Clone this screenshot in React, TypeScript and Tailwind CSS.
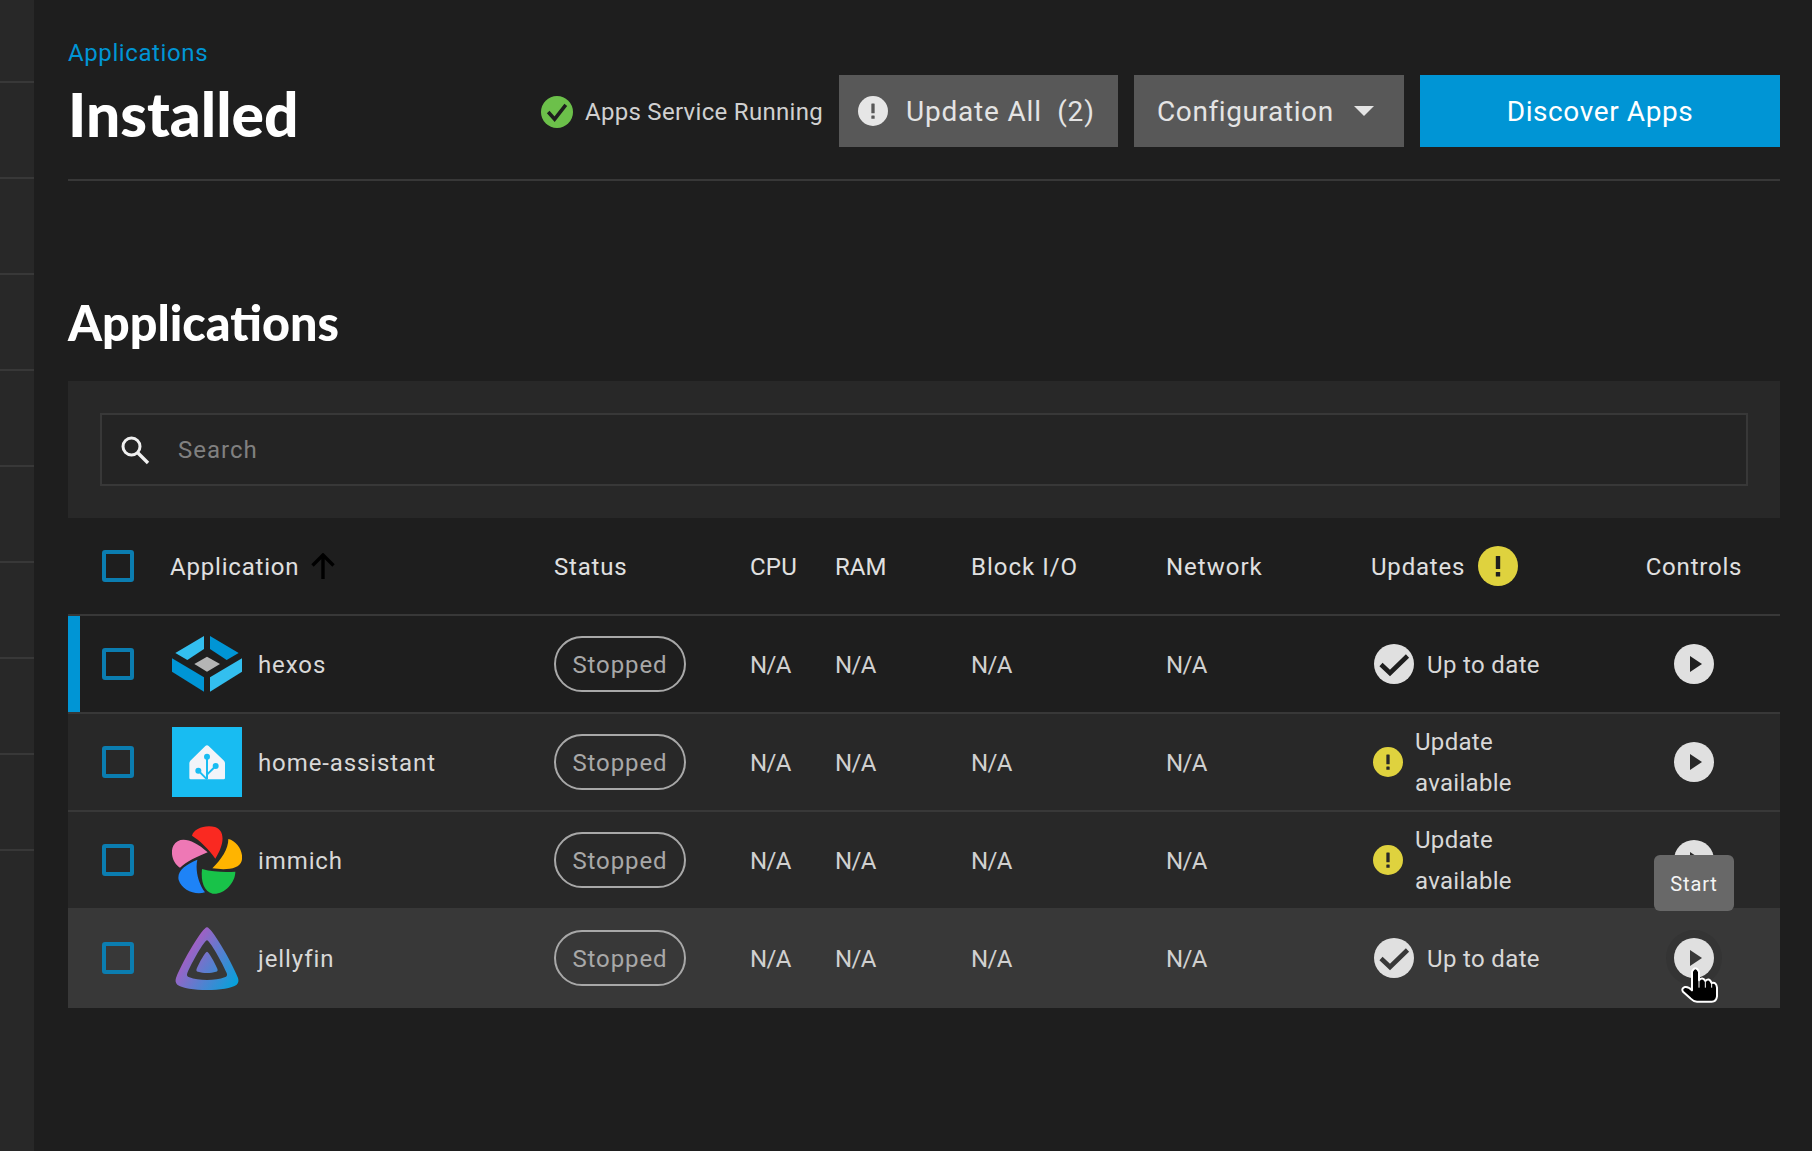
import React from "react";

const BODY = "font-['Roboto',sans-serif] tracking-[0.8px]";
const HEAD = "font-['Lato',sans-serif] font-black";
const GRID = "grid grid-cols-[102px_384px_196px_85px_136px_195px_204px_238px_172px] items-center";

function Hexos() {
  return (
    <svg width="70" height="56" viewBox="36 48 210 168">
      <polygon points="46,99 132,48 132,87 82,120" fill="#33bfef" />
      <polygon points="150,48 236,99 200,120 150,87" fill="#0095d5" />
      <polygon points="36,115 132,172 132,215 36,155" fill="#0095d5" />
      <polygon points="246,115 246,155 150,215 150,172" fill="#33bfef" />
      <polygon points="103,132 141,110 180,132 141,155" fill="#b5b5b5" />
    </svg>
  );
}

function HomeAssistant() {
  return (
    <svg width="70" height="70" viewBox="36 21 210 210">
      <rect x="36" y="21" width="210" height="210" fill="#18bcf2" />
      <path d="M136,78 Q141,73 146,78 L192,122 Q195,125 195,130 L195,174 Q195,178 191,178 L92,178 Q88,178 88,174 L88,130 Q88,125 91,122 Z" fill="#f2f4f9" />
      <path d="M141,110 L141,178 M115,152 L141,178 M167,138 L141,164" stroke="#18bcf2" strokeWidth="6" fill="none" />
      <circle cx="141" cy="110" r="9" fill="#18bcf2" />
      <circle cx="115" cy="152" r="9" fill="#18bcf2" />
      <circle cx="167" cy="138" r="9" fill="#18bcf2" />
    </svg>
  );
}

function Immich() {
  return (
    <svg width="70" height="70" viewBox="36 30 210 210">
      <path d="M96,62 C100,42 135,28 165,36 C195,46 195,85 166,131 C145,100 118,76 96,62 Z" fill="#fa2921" />
      <path d="M205,72 C232,78 252,112 245,138 C238,162 200,166 157,160 C185,132 205,102 205,72 Z" fill="#ffb400" />
      <path d="M126,162 C160,172 200,172 226,170 C226,205 190,240 158,236 C132,230 122,200 126,162 Z" fill="#18c249" />
      <path d="M112,134 C105,165 115,205 135,232 C105,242 66,225 56,195 C50,168 75,150 112,134 Z" fill="#1e83f7" />
      <path d="M143,112 C110,125 80,140 60,158 C38,145 30,112 40,92 C58,62 98,72 143,112 Z" fill="#ee78b5" />
    </svg>
  );
}

function Jellyfin() {
  return (
    <svg width="70" height="70" viewBox="36 20 210 210">
      <defs>
        <linearGradient id="jf" x1="75" y1="100" x2="235" y2="205" gradientUnits="userSpaceOnUse">
          <stop offset="0" stopColor="#aa5cc3" />
          <stop offset="1" stopColor="#00a4dc" />
        </linearGradient>
      </defs>
      <path
        fillRule="evenodd"
        fill="url(#jf)"
        d="M141,33 C128,33 70,130 48,185 Q44,197 52,205 C80,226 202,226 230,205 Q238,197 234,185 C212,130 154,33 141,33 Z M141,72 C133,72 95,140 82,170 Q78,180 88,183 C115,194 167,194 194,183 Q204,180 200,170 C187,140 149,72 141,72 Z"
      />
      <path fill="url(#jf)" d="M141,106 C136,106 118,138 110,157 Q107,165 114,166 C130,171 152,171 168,166 Q175,165 172,157 C164,138 146,106 141,106 Z" />
    </svg>
  );
}

function Alert({ size, bg, fg }: { size: number; bg: string; fg: string }) {
  return (
    <svg width={size} height={size} viewBox="0 0 40 40" className="shrink-0">
      <circle cx="20" cy="20" r="20" fill={bg} />
      <rect x="17.8" y="10" width="4.4" height="13" rx="0.5" fill={fg} />
      <rect x="17.8" y="26" width="4.4" height="4.4" rx="0.5" fill={fg} />
    </svg>
  );
}

function CheckCircle({ rowBg }: { rowBg: string }) {
  return (
    <svg width="40" height="40" viewBox="0 0 40 40" className="shrink-0">
      <circle cx="20" cy="20" r="20" fill="#e0e0e0" />
      <path d="M7 20.5 L16 29 L33.5 12" stroke={rowBg} strokeWidth="4.6" fill="none" />
    </svg>
  );
}

function Play({ rowBg }: { rowBg: string }) {
  return (
    <svg width="40" height="40" viewBox="0 0 40 40">
      <circle cx="20" cy="20" r="20" fill="#e0e0e0" />
      <polygon points="16,12 28,20 16,28" fill={rowBg} />
    </svg>
  );
}

function HandCursor() {
  return (
    <svg width="38" height="38" viewBox="122 374 114 114" className="absolute left-[7px] top-[27px]">
      <path
        d="M155,394 Q165,374 176,394 L176,420 Q186,408 195,422 Q206,410 214,428 Q228,424 230,442 L230,468 Q228,484 214,484 L170,484 Q160,484 150,474 L128,454 Q122,444 134,440 Q144,438 155,450 Z"
        fill="#000"
        stroke="#fff"
        strokeWidth="6"
        strokeLinejoin="round"
      />
      <path d="M176,422 L176,442 M195,424 L195,442 M214,430 L214,442" stroke="#fff" strokeWidth="3" fill="none" />
    </svg>
  );
}

function Checkbox() {
  return <div className="ml-[34px] h-8 w-8 rounded-[3px] border-4 border-[#0b7db0]" />;
}

type App = {
  name: string;
  icon: React.ReactNode;
  update: boolean;
  bg: string;
  rowClass: string;
};

const apps: App[] = [
  { name: "hexos", icon: <Hexos />, update: false, bg: "#1e1e1e", rowClass: "h-[98px] border-b-2 border-[#383838] bg-[#1e1e1e]" },
  { name: "home-assistant", icon: <HomeAssistant />, update: true, bg: "#282828", rowClass: "h-[98px] border-b-2 border-[#383838] bg-[#282828]" },
  { name: "immich", icon: <Immich />, update: true, bg: "#282828", rowClass: "h-[96px] bg-[#282828]" },
  { name: "jellyfin", icon: <Jellyfin />, update: false, bg: "#383838", rowClass: "h-[100px] bg-[#383838]" },
];

function Row({ app, index }: { app: App; index: number }) {
  const na = <span className="pt-[2px] tracking-[-0.6px] text-[#d0d0d0]">N/A</span>;
  return (
    <div className={`${GRID} ${app.rowClass} relative text-[24px] leading-[40px] tracking-[0.9px] text-[#d8d8d8]`}>
      {index === 0 && <div className="absolute left-0 top-0 h-full w-3 bg-[#0095d5]" />}
      <Checkbox />
      <div className="flex items-center gap-4">
        <div className="ml-[2px] flex h-[70px] w-[70px] items-center justify-center">{app.icon}</div>
        <span className="pt-[2px]">{app.name}</span>
      </div>
      <div>
        <div className="flex h-14 w-[132px] items-center justify-center rounded-full border-2 border-[#a8a8a8] pt-[2px] text-[#a8a8a8]">Stopped</div>
      </div>
      {na}
      {na}
      {na}
      {na}
      {app.update ? (
        <div className="flex items-center gap-3 pl-[3px]">
          <Alert size={30} bg="#dfd23e" fg={app.bg} />
          <span className="w-[110px] pt-[2px] leading-[41px] tracking-[0.3px]">Update available</span>
        </div>
      ) : (
        <div className="flex items-center gap-[13px] pl-1">
          <CheckCircle rowBg={app.bg} />
          <span className="pt-[2px] tracking-[0.35px]">Up to date</span>
        </div>
      )}
      <div className="flex justify-center">
        <div className="relative flex h-10 w-10 items-center justify-center">
          {index === 3 && <div className="absolute -inset-2 rounded-full bg-[#343434]" />}
          <div className="relative h-10 w-10">
            <Play rowBg={app.bg} />
          </div>
          {index === 3 && <HandCursor />}
          {index === 2 && (
            <div className="absolute left-[-20px] top-[15px] z-10 flex h-14 w-20 items-center justify-center rounded-md bg-[#686868] pt-px text-[20px] text-[#f4f4f4]">
              Start
            </div>
          )}
        </div>
      </div>
    </div>
  );
}

export default function App() {
  return (
    <div className={`flex h-[1151px] w-full overflow-hidden bg-[#1e1e1e] ${BODY}`}>
      <aside className="h-full w-9 shrink-0 border-r-2 border-[#1e1e1e] bg-[#282828]">
        <div className="h-[83px] border-b-2 border-[#383838]" />
        {[0, 1, 2, 3, 4, 5, 6, 7].map((i) => (
          <div key={i} className="h-24 border-b-2 border-[#383838]" />
        ))}
      </aside>
      <main className="min-w-0 flex-1 px-8 pt-[37px]">
        <div className="border-b-2 border-[#383838] pb-[32px]">
          <div className="h-[30px] text-[24px] leading-[32px] tracking-[0.6px] text-[#0095d5]">Applications</div>
          <div className="mt-2 flex h-[72px] items-center">
            <h1 className={`${HEAD} flex-1 pt-[5px] text-[60.5px] leading-[72px] tracking-normal text-white`}>Installed</h1>
            <div className="flex items-center gap-4">
              <div className="flex items-center gap-3 pt-px text-[24px] tracking-[0.3px] text-[#d0d0d0]">
                <svg width="32" height="32" viewBox="0 0 40 40">
                  <circle cx="20" cy="20" r="20" fill="#6cc04a" />
                  <path d="M9 20 L17 29 L31 11" stroke="#1e1e1e" strokeWidth="4.4" fill="none" />
                </svg>
                <span>Apps Service Running</span>
              </div>
              <button className="flex h-[72px] w-[279px] items-center gap-[18px] bg-[#585858] pl-[19px] text-[28px] tracking-[0.8px] text-[#e4e4e4]">
                <Alert size={30} bg="#e6e6e6" fg="#585858" />
                <span className="whitespace-pre pt-[2px]">Update All  (2)</span>
              </button>
              <button className="flex h-[72px] w-[270px] items-center gap-[20px] bg-[#585858] pl-[23px] text-[28px] tracking-[0.6px] text-[#e4e4e4]">
                <span className="pt-[2px]">Configuration</span>
                <span className="h-0 w-0 border-x-[10px] border-t-[10px] border-x-transparent border-t-[#e4e4e4]" />
              </button>
              <button className="flex h-[72px] w-[360px] items-center justify-center bg-[#0095d5] pt-[2px] text-[28px] tracking-[0.6px] text-white">Discover Apps</button>
            </div>
          </div>
        </div>

        <h2 className={`${HEAD} mt-[111px] text-[48.5px] leading-[60px] tracking-normal text-white`}>Applications</h2>

        <section className="mt-[29px]">
          <div className="bg-[#282828] p-8">
            <div className="flex h-[73px] items-center gap-[28px] border-2 border-[#383838] bg-[#242424] pl-[18px]">
              <svg width="30" height="30" viewBox="0 0 30 30" className="shrink-0">
                <circle cx="11.5" cy="11.5" r="8.5" stroke="#f0f0f0" strokeWidth="3" fill="none" />
                <path d="M18 18 L28 28" stroke="#f0f0f0" strokeWidth="3.4" />
              </svg>
              <input placeholder="Search" className="w-full bg-transparent text-[24px] tracking-[1px] outline-none placeholder:text-[#808080]" />
            </div>
          </div>

          <div className={`${GRID} h-[98px] border-b-2 border-[#383838] bg-[#1e1e1e] text-[24px] text-[#e0e0e0]`}>
            <Checkbox />
            <div className="flex items-center gap-3">
              <span className="pt-[2px]">Application</span>
              <svg width="24" height="26" viewBox="0 0 24 26">
                <path d="M12 26 L12 2 M1.5 12.5 L12 2 L22.5 12.5" stroke="#000" strokeWidth="3.4" fill="none" />
              </svg>
            </div>
            <span className="pt-[2px]">Status</span>
            <span className="pt-[2px] tracking-[0.2px]">CPU</span>
            <span className="pt-[2px] tracking-[0px]">RAM</span>
            <span className="pt-[2px] tracking-[1px]">Block I/O</span>
            <span className="pt-[2px] tracking-[1px]">Network</span>
            <div className="flex items-center gap-[13px] pl-px">
              <span className="pt-[2px]">Updates</span>
              <Alert size={40} bg="#dfd23e" fg="#1e1e1e" />
            </div>
            <span className="pt-[2px] text-center">Controls</span>
          </div>

          {apps.map((a, i) => (
            <Row key={a.name} app={a} index={i} />
          ))}
        </section>
      </main>
    </div>
  );
}
